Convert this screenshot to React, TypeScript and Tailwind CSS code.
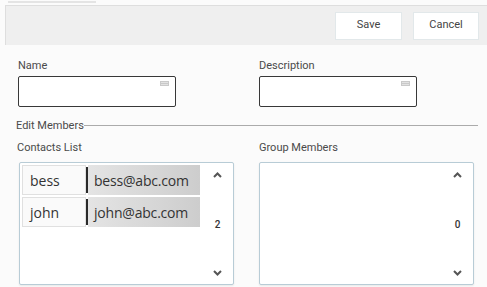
import React from "react";

const contacts = [
  { name: "bess", email: "bess@abc.com" },
  { name: "john", email: "john@abc.com" },
];

function KeyIcon() {
  return (
    <svg width="9" height="5" viewBox="0 0 9 5" className="absolute right-[6px] top-[4px]">
      <rect x="0" y="0" width="9" height="5" fill="#c9c9c9" />
      <rect x="1" y="1" width="7" height="1" fill="#e2e2e2" />
      <rect x="1" y="3" width="7" height="1" fill="#e2e2e2" />
    </svg>
  );
}

function Field({ label }: { label: string }) {
  return (
    <div className="flex flex-col pl-[1px]">
      <span className="text-[11px] leading-[14px] text-[#4a4a4a]">{label}</span>
      <div className="relative mt-[3px] w-[158px] h-[31px] bg-white border-[1.5px] border-[#383838] rounded-[2px]">
        <KeyIcon />
      </div>
    </div>
  );
}

function Chevron({ up }: { up?: boolean }) {
  return (
    <svg width="9" height="6" viewBox="0 0 9 6">
      <path d={up ? "M1 5 L4.5 1.5 L8 5" : "M1 1 L4.5 4.5 L8 1"} fill="none" stroke="#555" strokeWidth="2" />
    </svg>
  );
}

function ListBox({ items, count }: { items: { name: string; email: string }[]; count: number }) {
  return (
    <div className="flex w-[215px] h-[123px] bg-white border border-[#b8ccd6] rounded-[2px] shadow-[0_1px_2px_rgba(0,0,0,0.08)]">
      <div className="flex-1 flex flex-col gap-[2px] pt-[2px] pl-[2px]">
        {items.map((c) => (
          <div key={c.name} className="flex h-[30px] w-[178px]" style={{ fontFamily: '"Open Sans", sans-serif' }}>
            <div className="w-[64px] flex items-center pl-[7px] bg-[#fafafa] border border-[#e0e0e0] text-[14px] text-[#333]">
              {c.name}
            </div>
            <div className="w-[2px] my-[2px] bg-[#2a2a2a]" />
            <div className="flex-1 flex items-center pl-[6px] bg-gradient-to-r from-[#e4e4e4] to-[#cdcdcd] text-[14px] text-[#333] tracking-[-0.2px]">
              {c.email}
            </div>
          </div>
        ))}
      </div>
      <div className="w-[31px] flex flex-col items-center justify-between pt-[9px] pb-[8px]">
        <Chevron up />
        <span className="text-[10px] leading-[12px] font-medium text-[#333] mt-[2px]">{count}</span>
        <Chevron />
      </div>
    </div>
  );
}

export default function App() {
  return (
    <div className="w-[487px] h-[287px] overflow-hidden bg-[#fbfbfb]" style={{ fontFamily: "Roboto, sans-serif" }}>
      <div className="h-[5px] pl-[8px] pt-[1px]">
        <div className="w-[88px] h-[2px] bg-[#e4e4e4]" />
      </div>
      <div className="ml-[5px] h-[40px] bg-[#efefef] border-t border-l border-[#dedede] flex items-center justify-end gap-[11px] pr-[8px]">
        <button className="w-[67px] h-[28px] bg-white border border-[#e2e8ea] text-[11px] text-[#444]">Save</button>
        <button className="w-[66px] h-[28px] bg-white border border-[#e2e8ea] text-[11px] text-[#444]">Cancel</button>
      </div>

      <div className="pl-[17px] pr-[9px] pt-[14px]">
        <div className="grid grid-cols-[241px_1fr]">
          <Field label="Name" />
          <Field label="Description" />
        </div>

        <div className="flex items-center mt-[12px]">
          <span className="text-[11px] leading-[14px] text-[#4a4a4a] -ml-[1px]">Edit Members</span>
          <div className="flex-1 h-px bg-[#ababab] mt-[-2px]" />
        </div>

        <div className="grid grid-cols-[241px_1fr] mt-[8px]">
          <div className="flex flex-col">
            <span className="text-[11px] leading-[14px] text-[#4a4a4a]">Contacts List</span>
            <div className="mt-[7px] ml-[2px]">
              <ListBox items={contacts} count={2} />
            </div>
          </div>
          <div className="flex flex-col">
            <span className="text-[11px] leading-[14px] text-[#4a4a4a] pl-[1px]">Group Members</span>
            <div className="mt-[7px] ml-[1px]">
              <ListBox items={[]} count={0} />
            </div>
          </div>
        </div>
      </div>
    </div>
  );
}
